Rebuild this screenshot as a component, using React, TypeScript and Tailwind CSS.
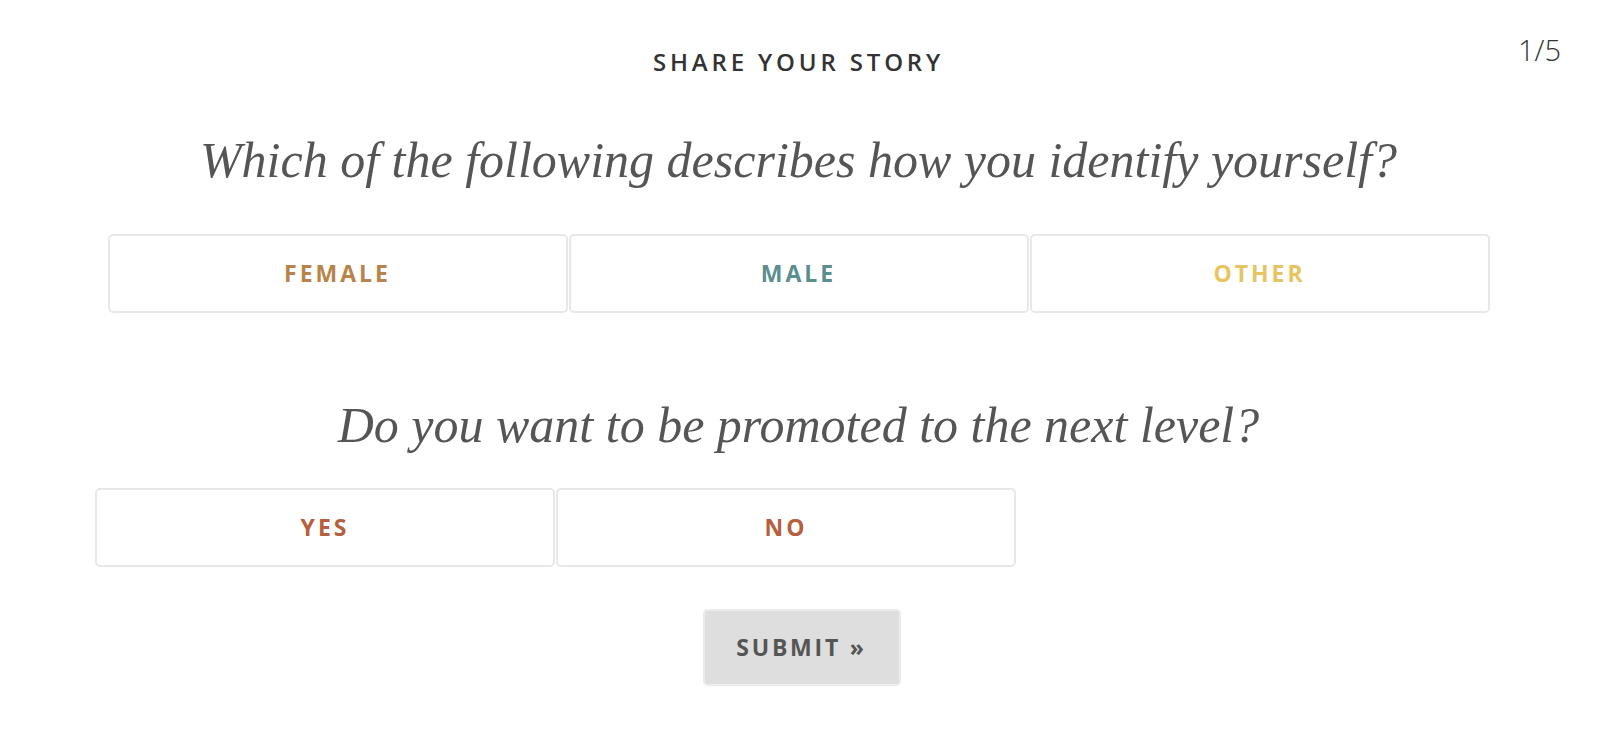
import React, { useState } from "react";

const genderOptions = [
  { label: "FEMALE", color: "text-[#b9834a]" },
  { label: "MALE", color: "text-[#5b8e8e]" },
  { label: "OTHER", color: "text-[#e8c460]" },
];

const promoOptions = [
  { label: "YES", color: "text-[#b55f3e]" },
  { label: "NO", color: "text-[#b55f3e]" },
];

function Choice({
  label,
  color,
  selected,
  onClick,
}: {
  label: string;
  color: string;
  selected: boolean;
  onClick: () => void;
}) {
  return (
    <button
      onClick={onClick}
      className={`w-[460px] h-[79px] rounded-[5px] border-2 border-[#e8e8e8] bg-white font-['Open_Sans',sans-serif] text-[23px] font-bold tracking-[0.13em] ${color} ${
        selected ? "bg-[#f7f7f7]" : ""
      }`}
    >
      {label}
    </button>
  );
}

export default function App() {
  const [gender, setGender] = useState<string>("");
  const [promo, setPromo] = useState<string>("");

  return (
    <div className="relative min-h-screen bg-white">
      <div className="absolute right-[36px] top-[28px] font-['Open_Sans',sans-serif] text-[29px] font-light text-[#333]">
        1/5
      </div>

      <div className="mx-auto w-[1407px] pt-[48px]">
        <h1 className="text-center font-['Open_Sans',sans-serif] text-[24px] font-semibold leading-[28px] tracking-[0.16em] text-[#333]">
          SHARE YOUR STORY
        </h1>

        <h2 className="mt-[54px] text-center font-['Liberation_Serif',serif] text-[50px] italic leading-[60px] text-[#555]">
          Which of the following describes how you identify yourself?
        </h2>

        <div className="mt-[44px] flex justify-center gap-[1px]">
          {genderOptions.map((o) => (
            <Choice
              key={o.label}
              label={o.label}
              color={o.color}
              selected={gender === o.label}
              onClick={() => setGender(o.label)}
            />
          ))}
        </div>

        <h2 className="mt-[82px] text-center font-['Liberation_Serif',serif] text-[50px] italic leading-[60px] text-[#555]">
          Do you want to be promoted to the next level?
        </h2>

        <div className="mt-[33px] flex gap-[1px]">
          {promoOptions.map((o) => (
            <Choice
              key={o.label}
              label={o.label}
              color={o.color}
              selected={promo === o.label}
              onClick={() => setPromo(o.label)}
            />
          ))}
        </div>

        <div className="mt-[42px] flex justify-center pl-[6px]">
          <button className="h-[77px] w-[198px] rounded-[5px] border-2 border-[#ebebeb] bg-[#dedede] font-['Open_Sans',sans-serif] text-[23px] font-bold tracking-[0.12em] text-[#555]">
            SUBMIT »
          </button>
        </div>
      </div>
    </div>
  );
}
